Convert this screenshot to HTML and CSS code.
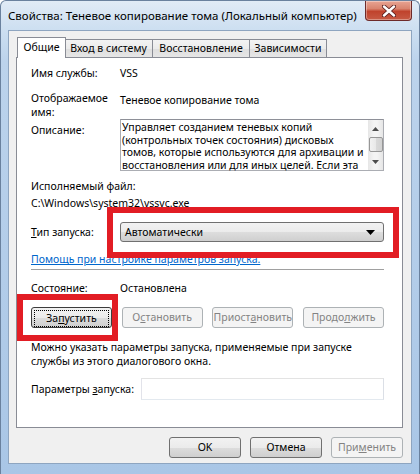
FILE: index.html
```html
<!DOCTYPE html>
<html>
	<head>
		<meta charset="utf-8">
		<title>Свойства: Теневое копирование тома</title>
		<link rel="stylesheet" href="styles.css">
	</head>
	<body>
		<div class="window">
			<div class="titlebar">
				<span class="title">Свойства: Теневое копирование тома (Локальный компьютер)</span>
				<div class="close">
					<svg width="14" height="12" viewBox="0 0 14 12">
						<path d="M2 1.5 L12 10.5 M12 1.5 L2 10.5" stroke="#5a2020" stroke-width="4.2" stroke-linecap="round"/>
						<path d="M2 1.5 L12 10.5 M12 1.5 L2 10.5" stroke="#fff" stroke-width="2.4" stroke-linecap="round"/>
					</svg>
				</div>
			</div>
			<div class="client">
				<div class="tabs">
					<div class="tab active">Общие</div>
					<div class="tab t-logon">Вход в систему</div>
					<div class="tab t-recovery">Восстановление</div>
					<div class="tab t-deps">Зависимости</div>
				</div>
				<div class="panel">
					<div class="field f-name">
						<span class="label">Имя службы:</span>
						<span class="value">VSS</span>
					</div>
					<div class="field f-display">
						<span class="label">Отображаемое<br>имя:</span>
						<span class="value v-display">Теневое копирование тома</span>
					</div>
					<div class="field f-desc">
						<span class="label l-desc">Описание:</span>
						<div class="textbox">
							<div class="textbox-text">Управляет созданием теневых копий<br>(контрольных точек состояния) дисковых<br>томов, которые используются для архивации и<br>восстановления или для иных целей. Если эта</div>
							<div class="scrollbar">
								<svg class="arrow" width="7" height="4" viewBox="0 0 7 4"><path d="M0 4 L3.5 0 L7 4 Z" fill="#4d4d4d"/></svg>
								<div class="thumb"></div>
								<svg class="arrow arrow-down" width="7" height="4" viewBox="0 0 7 4"><path d="M0 0 L3.5 4 L7 0 Z" fill="#4d4d4d"/></svg>
							</div>
						</div>
					</div>
					<div class="line l-exe">Исполняемый файл:</div>
					<div class="line l-path">C:\Windows\system32\vssvc.exe</div>
					<div class="field f-type">
						<span class="label"><u>Т</u>ип запуска:</span>
						<div class="select">
							<span>Автоматически</span>
							<svg width="9" height="5" viewBox="0 0 9 5"><path d="M0 0 L9 0 L4.5 5 Z" fill="#000"/></svg>
						</div>
					</div>
					<div class="line l-help"><a href="#">Помощь при настройке параметров запуска.</a></div>
					<div class="separator"></div>
					<div class="field f-state">
						<span class="label">Состояние:</span>
						<span class="value">Остановлена</span>
					</div>
					<div class="actions">
						<button class="btn focused"><span class="focus-rect">За<u>п</u>устить</span></button>
						<button class="btn disabled">О<u>с</u>тановить</button>
						<button class="btn disabled">Приост<u>а</u>новить</button>
						<button class="btn disabled">Продо<u>л</u>жить</button>
					</div>
					<div class="note">Можно указать параметры запуска, применяемые при запуске<br>службы из этого диалогового окна.</div>
					<div class="field f-params">
						<span class="label l-params">Параметры <u>з</u>апуска:</span>
						<div class="input"></div>
					</div>
				</div>
				<div class="footer">
					<button class="btn">OK</button>
					<button class="btn">Отмена</button>
					<button class="btn disabled">При<u>м</u>енить</button>
				</div>
			</div>
			<div class="mark mark-type"></div>
			<div class="mark mark-start"></div>
		</div>
	</body>
</html>
```

FILE: styles.css
```css
body{
	margin: 0;
	font-family: "Noto Sans", "Open Sans", sans-serif;
	font-size: 10.5px;
	color: #000;
}
.window{
	position: relative;
	width: 420px;
	height: 474px;
	box-sizing: border-box;
	border: 1px solid #6a819e;
	border-bottom: none;
	border-radius: 6px 6px 0 0;
	background: linear-gradient(180deg, #e1ebf6 0, #cddff1 28px, #bcd3ec 60px, #a9c6e6 100%);
	display: flex;
	flex-direction: column;
	overflow: hidden;
}
.titlebar{
	height: 29px;
	display: flex;
	align-items: flex-start;
}
.title{
	padding: 7px 0 0 7px;
	font-size: 11.5px;
	line-height: 15px;
	white-space: nowrap;
	color: #000;
}
.close{
	margin-left: auto;
	margin-right: 7px;
	width: 47px;
	height: 20px;
	flex: none;
	box-sizing: border-box;
	border: 1px solid #6d2a2a;
	border-top: none;
	border-radius: 0 0 4px 4px;
	background: linear-gradient(180deg, #e8a493 0, #d9846f 40%, #c0432d 55%, #c75a44 100%);
	box-shadow: inset 0 0 0 1px rgba(255,255,255,0.35);
	display: flex;
	align-items: center;
	justify-content: center;
}
.client{
	margin: 0 7px;
	height: 434px;
	box-sizing: border-box;
	border: 1px solid #8ea5c0;
	background: #f0f0f0;
}
.tabs{
	height: 26px;
	padding-left: 8px;
	display: flex;
	align-items: flex-end;
}
.tab{
	box-sizing: border-box;
	height: 18px;
	border: 1px solid #898c95;
	border-bottom: none;
	margin-left: -1px;
	background: linear-gradient(180deg, #f3f3f3 0, #ebebeb 50%, #dedede 51%, #e6e6e6 100%);
	text-align: center;
	line-height: 16px;
}
.tab.active{
	position: relative;
	z-index: 1;
	width: 49px;
	height: 21px;
	margin-left: 0;
	margin-right: -1px;
	margin-bottom: -1px;
	background: #fff;
	line-height: 18px;
}
.t-logon{
	width: 89px;
}
.t-recovery{
	width: 98px;
}
.t-deps{
	width: 78px;
}
.panel{
	margin: 0 8px 0 7px;
	height: 371px;
	box-sizing: border-box;
	border: 1px solid #898c95;
	background: #fff;
	padding: 8px 18px 0 14px;
	line-height: 14px;
}
.field{
	display: flex;
	align-items: flex-start;
}
.label{
	width: 89px;
	flex: none;
}
.f-display{
	margin-top: 11px;
}
.v-display{
	padding-top: 2px;
}
.l-desc{
	padding-top: 4px;
}
.textbox{
	width: 266px;
	height: 52px;
	box-sizing: border-box;
	border: 1px solid #abadb3;
	border-top-color: #8e9098;
	display: flex;
}
.textbox-text{
	flex: 1;
	padding: 1px 2px 0 1px;
	line-height: 12.5px;
	white-space: nowrap;
}
.scrollbar{
	width: 15px;
	flex: none;
	background: linear-gradient(90deg, #e6e6e6, #f4f4f4 40%, #f4f4f4 60%, #e6e6e6);
	display: flex;
	flex-direction: column;
	align-items: center;
}
.arrow{
	margin-top: 7px;
}
.arrow-down{
	margin-top: 8px;
}
.thumb{
	margin-top: 6px;
	width: 14px;
	height: 15px;
	box-sizing: border-box;
	border: 1px solid #979797;
	border-radius: 2px;
	background: linear-gradient(90deg, #f2f2f2, #e8e8e8 50%, #d9d9d9 51%, #d2d2d2);
}
.l-exe{
	margin-top: 8px;
}
.l-path{
	margin-top: 3px;
}
.f-type{
	margin-top: 12px;
	align-items: center;
}
.select{
	width: 266px;
	height: 20px;
	box-sizing: border-box;
	border: 1px solid #707070;
	border-radius: 3px;
	background: linear-gradient(180deg, #f2f2f2 0, #ebebeb 50%, #dddddd 51%, #cfcfcf 100%);
	padding: 0 8px 0 4px;
	display: flex;
	align-items: center;
	justify-content: space-between;
}
.l-help{
	margin-top: 10px;
}
.l-help a{
	color: #0066cc;
	text-decoration: underline;
}
.separator{
	margin-top: 3px;
	height: 1px;
	background: #a0a0a0;
	border-bottom: 1px solid #fff;
}
.f-state{
	margin-top: 10px;
}
.actions{
	margin-top: 12px;
	display: flex;
	justify-content: space-between;
}
.btn{
	box-sizing: border-box;
	width: 81px;
	height: 21px;
	padding: 0;
	border: 1px solid #707070;
	border-radius: 3px;
	background: linear-gradient(180deg, #f2f2f2 0, #ebebeb 50%, #dddddd 51%, #cfcfcf 100%);
	font: inherit;
	color: #000;
	line-height: 19px;
	text-align: center;
}
.btn.disabled{
	border-color: #adb2b5;
	background: #f4f4f4;
	color: #838383;
}
.btn.focused{
	border-color: #3c3c3c;
	padding: 2px;
}
.focus-rect{
	display: block;
	height: 15px;
	line-height: 15px;
	border: 1px dotted #000;
}
.note{
	margin-top: 12px;
}
.f-params{
	margin-top: 10px;
	align-items: center;
}
.l-params{
	width: 110px;
}
.input{
	flex: 1;
	height: 22px;
	box-sizing: border-box;
	border: 1px solid #abadb3;
	border-top-color: #e3e3e3;
	border-left-color: #e2e3ea;
	border-right-color: #dbdfe6;
	border-bottom-color: #e3e9ef;
}
.footer{
	padding: 9px 8px 0 0;
	display: flex;
	justify-content: flex-end;
	gap: 9px;
}
.footer .btn{
	width: 72px;
}
.mark{
	position: absolute;
	box-sizing: border-box;
	border: 6px solid #e21d24;
}
.mark-type{
	left: 106px;
	top: 206px;
	width: 292px;
	height: 51px;
}
.mark-start{
	left: 16px;
	top: 293px;
	width: 101px;
	height: 47px;
}
```
